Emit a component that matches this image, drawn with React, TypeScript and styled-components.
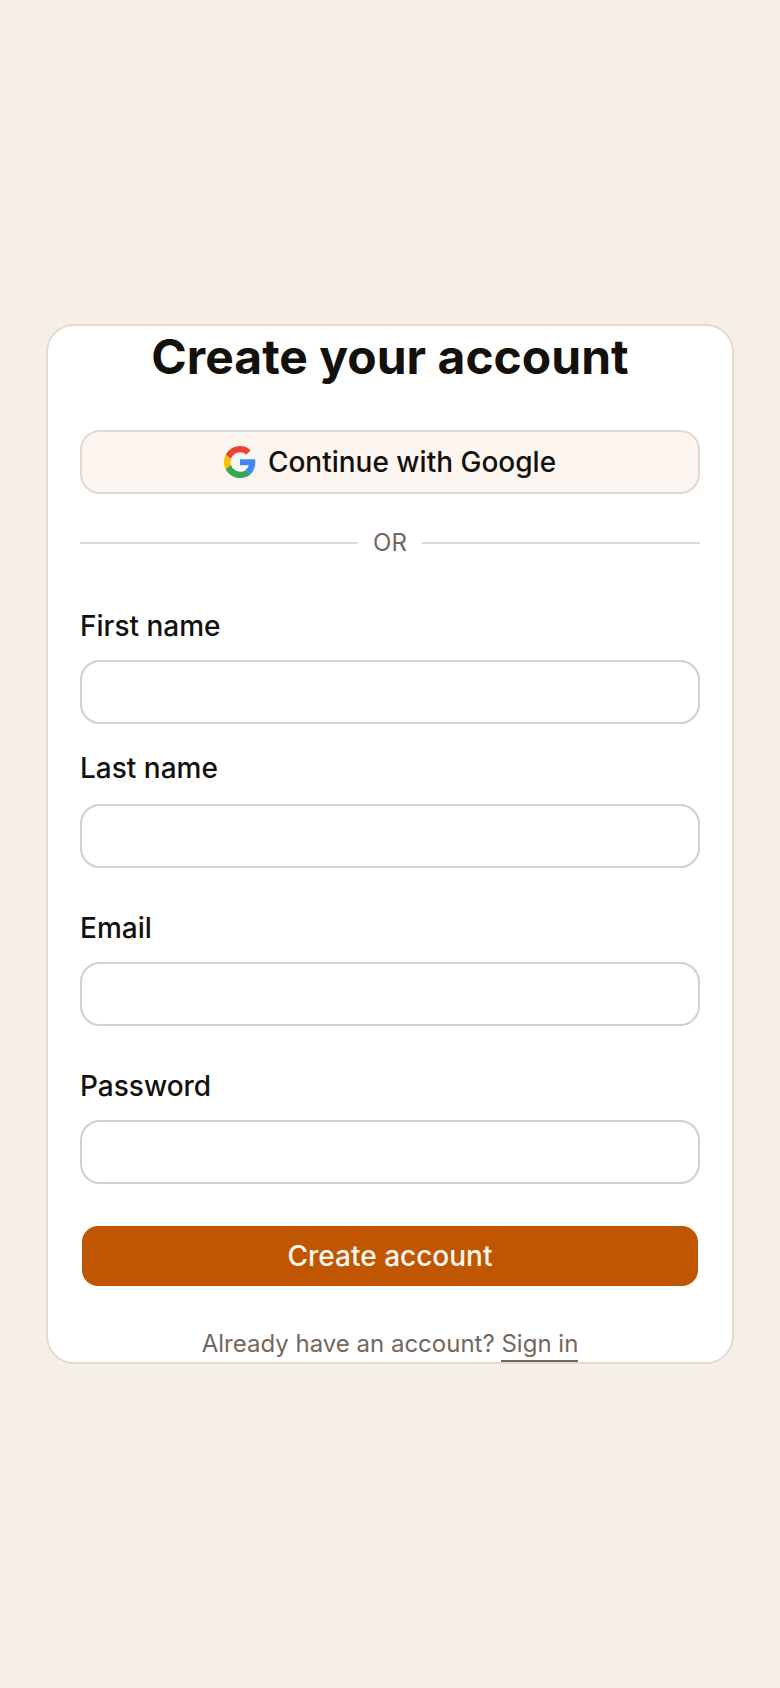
import React from "react";
import styled, { createGlobalStyle } from "styled-components";

const GlobalStyle = createGlobalStyle`
    html, body {
        margin: 0;
        padding: 0;
    }

    body {
        background: #f6efe8;
        font-family: Inter, "Liberation Sans", sans-serif;
        color: #14100c;
    }
`;

const Page = styled.main`
    display: flex;
    align-items: center;
    justify-content: center;
    height: 1688px;
`;

const Card = styled.section`
    box-sizing: border-box;
    display: flex;
    flex-direction: column;
    width: 688px;
    height: 1040px;
    padding: 2px 32px 0;
    background: #ffffff;
    border: 2px solid #e2dad2;
    border-radius: 28px;
`;

const Title = styled.h1`
    margin: 0 0 44px;
    font-size: 48px;
    line-height: 58px;
    font-weight: 700;
    text-align: center;
    color: #14100c;
`;

const GoogleButton = styled.button`
    box-sizing: border-box;
    display: flex;
    align-items: center;
    justify-content: center;
    gap: 12px;
    width: 100%;
    height: 64px;
    padding: 0;
    background: #fdf6f0;
    border: 2px solid #e2dad2;
    border-radius: 20px;
    font: 500 28px Inter, sans-serif;
    color: #14100c;
`;

const Divider = styled.div`
    display: flex;
    align-items: center;
    gap: 15px;
    margin: 33px 0 49px;
    font-size: 24px;
    line-height: 32px;
    color: #75665c;

    &::before,
    &::after {
        content: "";
        flex: 1;
        height: 2px;
        background: #e0dad0;
    }
`;

const Field = styled.div<{ $gap: number }>`
    display: flex;
    flex-direction: column;
    margin-bottom: ${(p) => p.$gap}px;
`;

const Label = styled.label<{ $gap?: number }>`
    margin-bottom: ${(p) => p.$gap ?? 16}px;
    font-size: 28px;
    line-height: 36px;
    font-weight: 500;
    color: #14100c;
`;

const Input = styled.input`
    box-sizing: border-box;
    width: 100%;
    height: 64px;
    padding: 0 20px;
    background: #ffffff;
    border: 2px solid #d6cfc7;
    border-radius: 20px;
    outline: none;
`;

const SubmitButton = styled.button`
    display: block;
    width: 616px;
    height: 60px;
    margin: 12px auto 0;
    padding: 0;
    background: #c05600;
    border: none;
    border-radius: 16px;
    font: 500 28px Inter, sans-serif;
    color: #fff8f0;
`;

const Footer = styled.p`
    margin: 40px 0 0;
    font-size: 24px;
    line-height: 36px;
    text-align: center;
    color: #75665c;
`;

const SignIn = styled.a`
    color: inherit;
    text-decoration: none;
    padding-bottom: 2px;
    border-bottom: 2px solid #75665c;
`;

const GoogleIcon = () => (
    <svg width="32" height="32" viewBox="0 0 48 48" aria-hidden="true">
        <path fill="#EA4335" d="M24 9.5c3.54 0 6.71 1.22 9.21 3.6l6.85-6.85C35.9 2.38 30.47 0 24 0 14.62 0 6.51 5.38 2.56 13.22l7.98 6.19C12.43 13.72 17.74 9.5 24 9.5z" />
        <path fill="#4285F4" d="M46.98 24.55c0-1.57-.15-3.09-.38-4.55H24v9.02h12.94c-.58 2.96-2.26 5.48-4.78 7.18l7.73 6c4.51-4.18 7.09-10.36 7.09-17.65z" />
        <path fill="#FBBC05" d="M10.53 28.59c-.48-1.45-.76-2.99-.76-4.59s.27-3.14.76-4.59l-7.98-6.19C.92 16.46 0 20.12 0 24c0 3.88.92 7.54 2.56 10.78l7.97-6.19z" />
        <path fill="#34A853" d="M24 48c6.48 0 11.93-2.13 15.89-5.81l-7.73-6c-2.15 1.45-4.92 2.3-8.16 2.3-6.26 0-11.57-4.22-13.47-9.91l-7.98 6.19C6.51 42.62 14.62 48 24 48z" />
    </svg>
);

const App = () => {
    return (
        <Page>
            <GlobalStyle />
            <Card>
                <Title>Create your account</Title>
                <GoogleButton type="button">
                    <GoogleIcon />
                    Continue with Google
                </GoogleButton>
                <Divider>OR</Divider>
                <Field $gap={26}>
                    <Label>First name</Label>
                    <Input type="text" />
                </Field>
                <Field $gap={42}>
                    <Label $gap={18}>Last name</Label>
                    <Input type="text" />
                </Field>
                <Field $gap={42}>
                    <Label>Email</Label>
                    <Input type="email" />
                </Field>
                <Field $gap={30}>
                    <Label>Password</Label>
                    <Input type="password" />
                </Field>
                <SubmitButton type="button">Create account</SubmitButton>
                <Footer>
                    Already have an account? <SignIn href="#">Sign in</SignIn>
                </Footer>
            </Card>
        </Page>
    );
};

export default App;
